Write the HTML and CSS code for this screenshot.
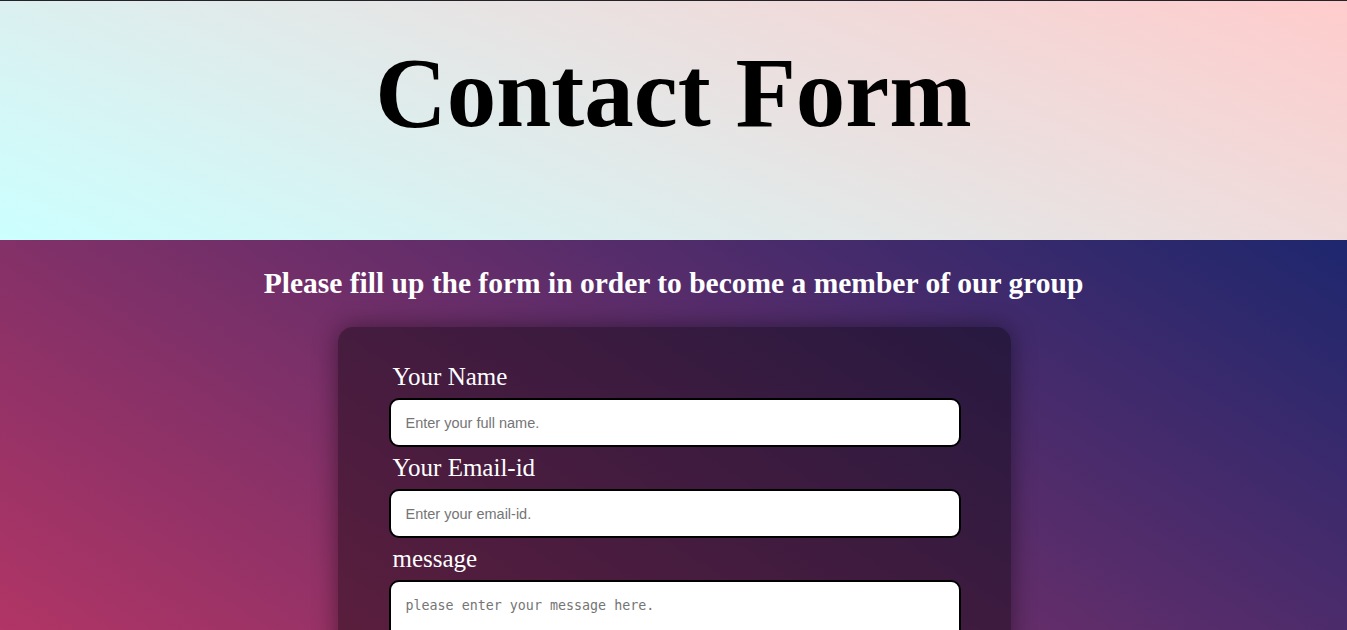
FILE: index.html
```html
<!DOCTYPE html>
<html lang="en">
<head>
<meta charset="utf-8">
<title>Contact Form</title>
<link rel="stylesheet" href="styles.css">
</head>
<body>
<header class="hero">
  <h1 class="hero-title">Contact Form</h1>
</header>
<main class="join">
  <h2 class="join-lead">Please fill up the form in order to become a member of our group</h2>
  <form class="card">
    <label class="field-label" for="name">Your Name</label>
    <input class="field" id="name" type="text" placeholder="Enter your full name.">
    <label class="field-label" for="email">Your Email-id</label>
    <input class="field" id="email" type="email" placeholder="Enter your email-id.">
    <label class="field-label" for="msg">message</label>
    <textarea class="field field-area" id="msg" placeholder="please enter your message here."></textarea>
    <button class="submit" type="submit">Submit</button>
  </form>
</main>
</body>
</html>
```
FILE: styles.css
```css
html, body {
  margin: 0;
  padding: 0;
}

.hero {
  height: 240px;
  box-sizing: border-box;
  border-top: 1px solid #232228;
  padding-top: 42px;
  background: linear-gradient(23deg, #ccffff, #ffcccc);
}

.hero-title {
  margin: 0;
  font-family: "Liberation Serif", "Times New Roman", serif;
  font-weight: bold;
  font-size: 99px;
  line-height: 100px;
  text-align: center;
  color: #000;
}

.join {
  min-height: 858px;
  box-sizing: border-box;
  padding: 25px 0 60px;
  display: flex;
  flex-direction: column;
  align-items: center;
  background: linear-gradient(to top right, #e83a62, #1e276e);
}

.join-lead {
  margin: 0;
  font-family: "Liberation Serif", "Times New Roman", serif;
  font-weight: bold;
  font-size: 29.5px;
  line-height: 37px;
  color: #fff;
  text-align: center;
}

.card {
  width: 673px;
  margin-top: 25px;
  margin-left: 2px;
  box-sizing: border-box;
  padding: 35px 0 40px;
  display: flex;
  flex-direction: column;
  align-items: center;
  background: rgba(0, 0, 0, 0.4);
  border-radius: 15px;
  box-shadow: 0 0 25px rgba(0, 0, 0, 0.45);
}

.field-label {
  width: 572px;
  box-sizing: border-box;
  padding-left: 4px;
  margin: 6px 0 7px;
  font-family: "Liberation Serif", "Times New Roman", serif;
  font-size: 25px;
  line-height: 29px;
  color: #fff;
}

.field-label:first-child {
  margin-top: 0;
}

.field {
  width: 572px;
  height: 49px;
  box-sizing: border-box;
  margin: 0;
  padding: 0 15px;
  border: 2px solid #000;
  border-radius: 10px;
  background: #fff;
  font-family: "Liberation Sans", Arial, sans-serif;
  font-size: 14.5px;
  color: #222;
  outline: none;
}

.field::placeholder {
  color: #757575;
}

.field-area {
  height: 160px;
  padding: 16px 15px 15px;
  font-family: "DejaVu Sans Mono", monospace;
  font-size: 13.33px;
  resize: vertical;
}

.submit {
  margin-top: 25px;
  padding: 10px 40px;
  border: 2px solid #000;
  border-radius: 10px;
  background: #fff;
  font-family: "Liberation Serif", serif;
  font-size: 20px;
  cursor: pointer;
}
```
